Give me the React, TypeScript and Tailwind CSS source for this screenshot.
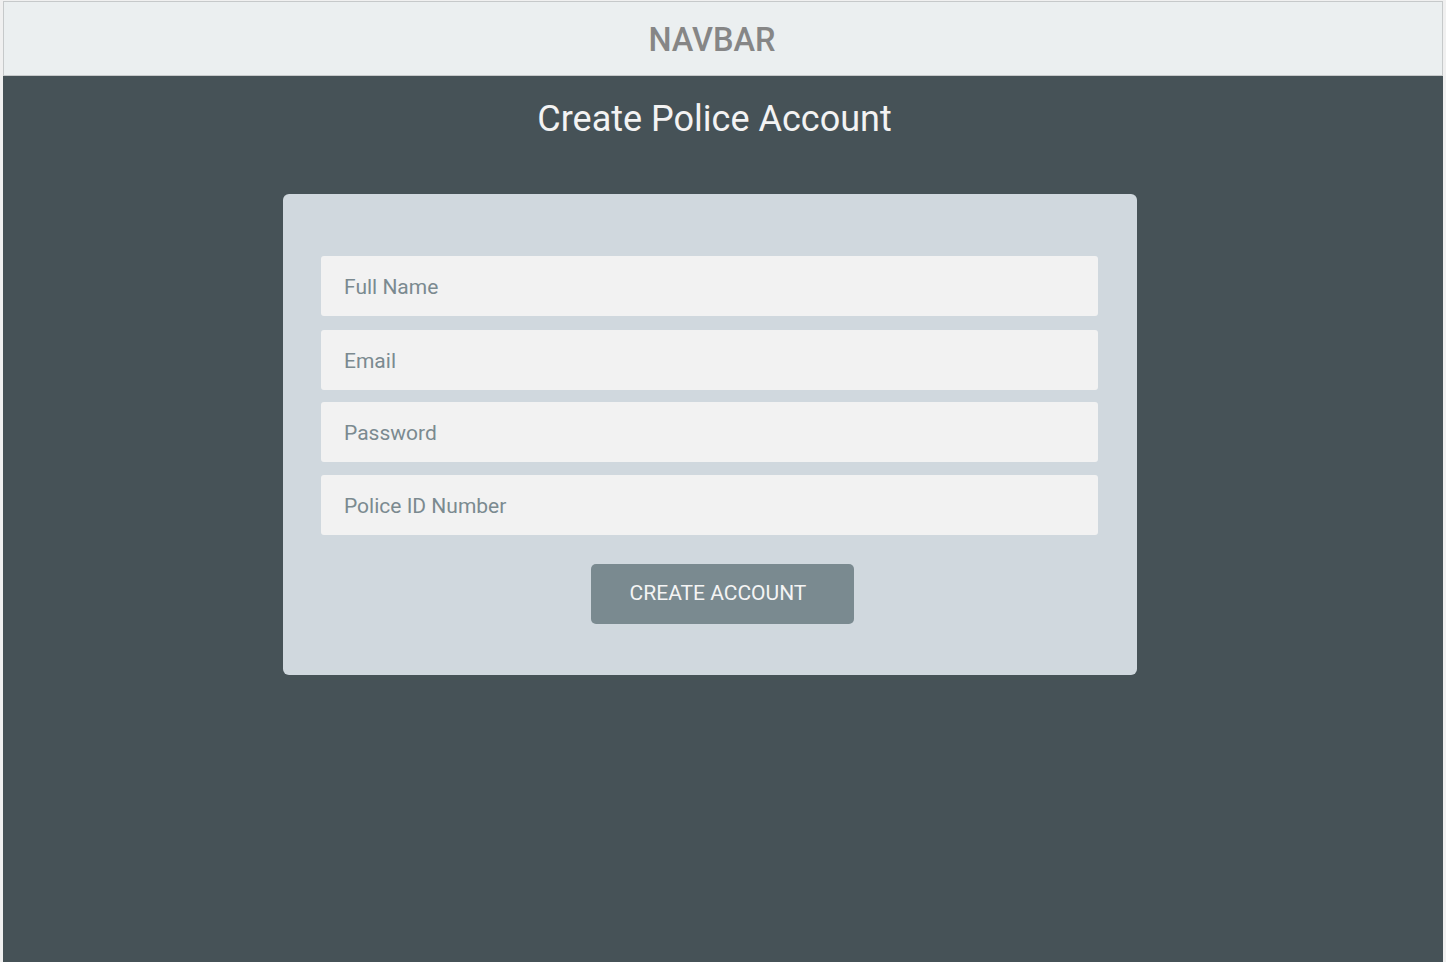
export default function App() {
  const fields = [
    { label: "Full Name", gap: "" },
    { label: "Email", gap: "mt-[14px]" },
    { label: "Password", gap: "mt-[12px]" },
    { label: "Police ID Number", gap: "mt-[13px]" },
  ];
  return (
    <div className="flex h-[962px] flex-col bg-[#f0f0f0] pl-[3px] pr-[3px] pt-px font-['Roboto',sans-serif]">
      <header className="flex h-[75px] shrink-0 items-center justify-center border border-[#c6c9ca] bg-[#ebeff0]">
        <span className="pr-[22px] pt-[4px] text-[32.5px] font-medium text-[#868686]">NAVBAR</span>
      </header>
      <main className="flex flex-1 flex-col items-center bg-[#465257]">
        <h1 className="mt-[21px] pr-[17px] text-[36px] leading-[44px] text-[#f3f3f3]">Create Police Account</h1>
        <div className="mr-[26px] mt-[53px] w-[854px] rounded-[6px] bg-[#d0d8de] pb-[51px] pl-[38px] pr-[39px] pt-[62px]">
          <div className="flex flex-col">
            {fields.map((f) => (
              <input
                key={f.label}
                placeholder={f.label}
                className={`${f.gap} h-[60px] w-full rounded-[3px] bg-[#f2f2f2] pl-[23px] pt-[2px] text-[21px] text-[#3c4a50] outline-none placeholder:text-[#7b8a90]`}
              />
            ))}
          </div>
          <button
            type="button"
            className="ml-[270px] mt-[29px] h-[60px] w-[263px] rounded-[5px] bg-[#7a8a90] pr-[9px] text-[21px] text-[#f4f4f4]"
          >
            CREATE ACCOUNT
          </button>
        </div>
      </main>
    </div>
  );
}
